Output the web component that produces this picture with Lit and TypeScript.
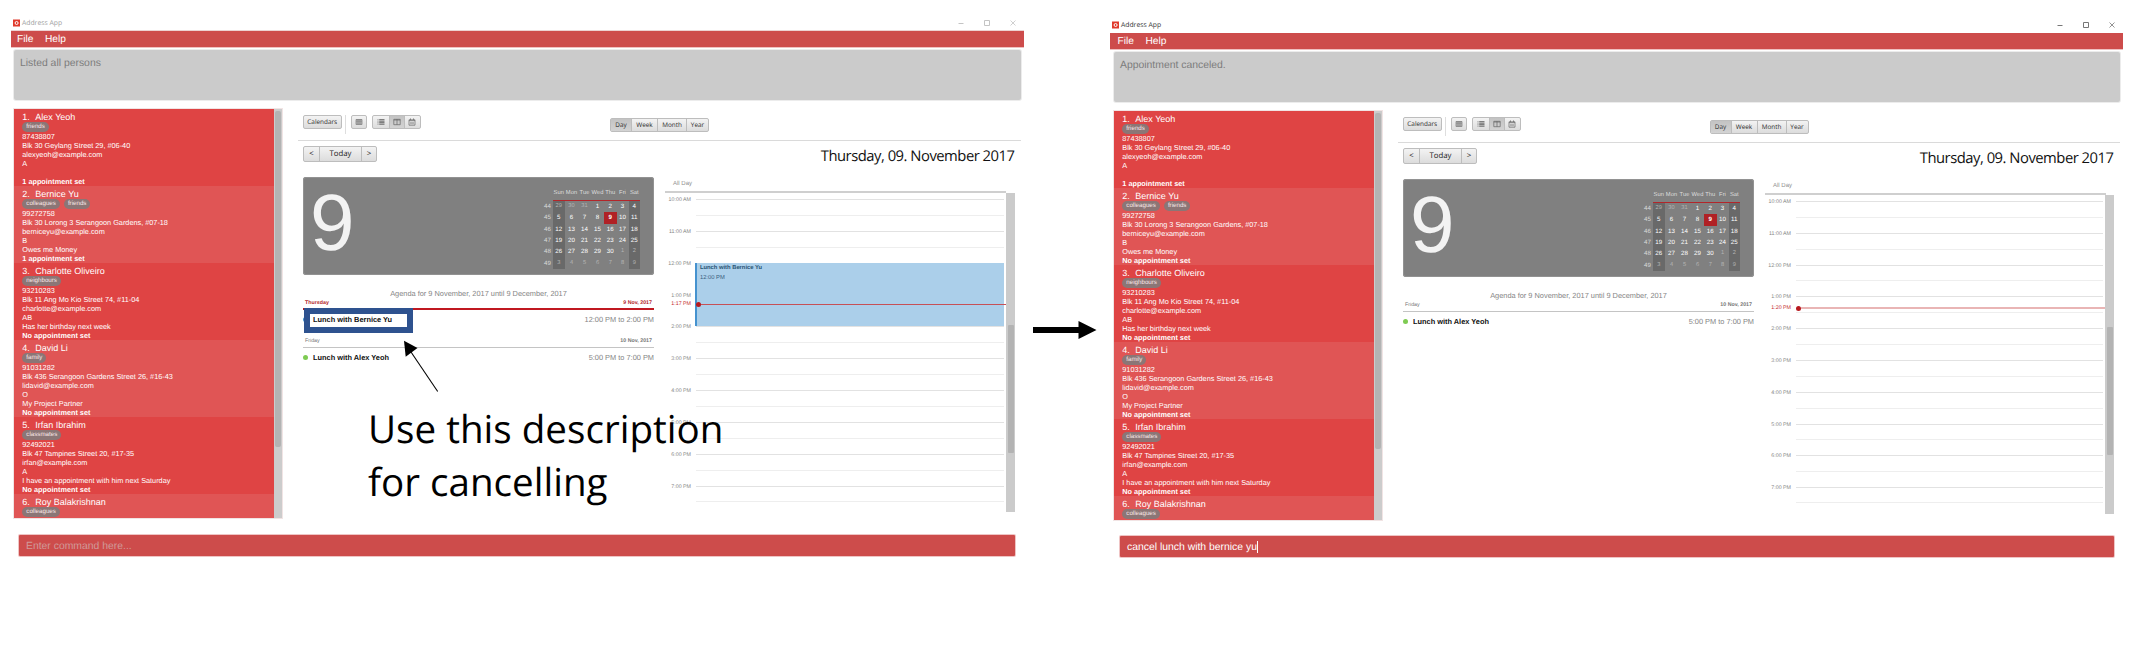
import { LitElement, html, css, svg, nothing } from "lit";
import { customElement, property } from "lit/decorators.js";
import { classMap } from "lit/directives/class-map.js";

interface Person {
  name: string;
  tags: string[];
  phone?: string;
  address?: string;
  email?: string;
  blood?: string;
  remark?: string;
  status?: string;
}

interface AgendaDay {
  day: string;
  date: string;
  today: boolean;
  title: string;
  time: string;
  boxed: boolean;
}

interface WindowState {
  message: string;
  command: string;
  placeholder: boolean;
  active: boolean;
  people: Person[];
  agenda: AgendaDay[];
  now: string;
  nowTop: number;
  event: boolean;
}

const NONE = "No appointment set";
const ONE = "1 appointment set";

const people = (berniceStatus: string): Person[] => [
  { name: "Alex Yeoh", tags: ["friends"], phone: "87438807", address: "Blk 30 Geylang Street 29, #06-40", email: "alexyeoh@example.com", blood: "A", remark: "", status: ONE },
  { name: "Bernice Yu", tags: ["colleagues", "friends"], phone: "99272758", address: "Blk 30 Lorong 3 Serangoon Gardens, #07-18", email: "berniceyu@example.com", blood: "B", remark: "Owes me Money", status: berniceStatus },
  { name: "Charlotte Oliveiro", tags: ["neighbours"], phone: "93210283", address: "Blk 11 Ang Mo Kio Street 74, #11-04", email: "charlotte@example.com", blood: "AB", remark: "Has her birthday next week", status: NONE },
  { name: "David Li", tags: ["family"], phone: "91031282", address: "Blk 436 Serangoon Gardens Street 26, #16-43", email: "lidavid@example.com", blood: "O", remark: "My Project Partner", status: NONE },
  { name: "Irfan Ibrahim", tags: ["classmates"], phone: "92492021", address: "Blk 47 Tampines Street 20, #17-35", email: "irfan@example.com", blood: "A", remark: "I have an appointment with him next Saturday", status: NONE },
  { name: "Roy Balakrishnan", tags: ["colleagues"] },
];

const friday: AgendaDay = { day: "Friday", date: "10 Nov, 2017", today: false, title: "Lunch with Alex Yeoh", time: "5:00 PM to 7:00 PM", boxed: false };

const before: WindowState = {
  message: "Listed all persons",
  command: "Enter command here...",
  placeholder: true,
  active: false,
  people: people(ONE),
  agenda: [
    { day: "Thursday", date: "9 Nov, 2017", today: true, title: "Lunch with Bernice Yu", time: "12:00 PM to 2:00 PM", boxed: true },
    friday,
  ],
  now: "1:17 PM",
  nowTop: 105,
  event: true,
};

const after: WindowState = {
  message: "Appointment canceled.",
  command: "cancel lunch with bernice yu",
  placeholder: false,
  active: true,
  people: people(NONE),
  agenda: [friday],
  now: "1:20 PM",
  nowTop: 107,
  event: false,
};

const HOURS = ["10:00 AM", "11:00 AM", "12:00 PM", "1:00 PM", "2:00 PM", "3:00 PM", "4:00 PM", "5:00 PM", "6:00 PM", "7:00 PM"];

const WEEKS: [number, number[]][] = [
  [44, [29, 30, 31, 1, 2, 3, 4]],
  [45, [5, 6, 7, 8, 9, 10, 11]],
  [46, [12, 13, 14, 15, 16, 17, 18]],
  [47, [19, 20, 21, 22, 23, 24, 25]],
  [48, [26, 27, 28, 29, 30, 1, 2]],
  [49, [3, 4, 5, 6, 7, 8, 9]],
];

@customElement("address-window")
export class AddressWindow extends LitElement {
  @property({ attribute: false }) state: WindowState = before;

  static styles = css`
    :host {
      display: flex;
      flex-direction: column;
      width: 1013px;
      font-family: "Liberation Sans", Arial, sans-serif;
      font-size: 7.4px;
      text-rendering: geometricPrecision;
      --shift: 0px;
      --body: 435px;
      --hour: 31.87px;
      --chrome: #a0a0a0;
      --ctl: #c4c4c4;
    }
    :host([active]) {
      --shift: 1px;
      --body: 434px;
      --hour: 31.8px;
      --chrome: #333;
      --ctl: #777;
    }
    * { box-sizing: border-box; }
    .titlebar {
      display: flex;
      align-items: center;
      height: 16px;
      padding: 0 8px 0 2px;
      color: var(--chrome);
      font: 6.8px/16px "Open Sans", sans-serif;
      white-space: pre;
    }
    .titlebar svg { display: block; }
    .appname { flex: 1; padding-left: 2px; }
    .controls { display: flex; gap: 20px; color: var(--ctl); }
    .menu {
      display: flex;
      gap: 11.5px;
      height: 17px;
      padding-left: 6px;
      background: #cd4c4b;
      border-bottom: 1px solid #efc0c0;
      box-shadow: 0 -1px 0 #ecd2d2;
      color: #fff;
      font-size: 10.2px;
      line-height: 18px;
    }
    :host([active]) .menu { padding-left: 7.5px; box-shadow: none; }
    .message {
      height: 50px;
      margin: 2px 3px 0 calc(3px + var(--shift));
      padding: 7px 6px;
      background: #cbcbcb;
      border-radius: 2px;
      box-shadow: 0 0 0 1px #ececec;
      color: #7c7c7c;
      font-size: 10.4px;
      line-height: 14px;
    }
    .body { display: flex; height: var(--body); padding: 9px 3px 0 calc(3px + var(--shift)); }
    .list { display: flex; width: 268px; height: 409px; flex: none; box-shadow: 0 0 0 1px #f1e4e4; }
    .cards { width: 260px; overflow: hidden; }
    .card { height: 77px; padding-left: 8.3px; background: #df4444; color: #fff; font-size: 7.3px; line-height: 9.6px; }
    .card:nth-child(even) { background: #e05555; }
    .name { display: flex; height: 13px; padding-top: 1.5px; font-size: 9px; line-height: 12px; }
    .index { width: 13px; }
    .tags { display: flex; gap: 4px; height: 10px; }
    .tag { padding: 0 4px; border-radius: 5px; background: #8b7676; color: #f8e6e6; font-size: 6.2px; line-height: 10px; }
    .line { height: 8.97px; white-space: pre; }
    .strong { font-weight: bold; }
    .track { width: 8px; padding: 2px 1px; background: #ccc; }
    .thumb { height: 336px; border-radius: 2px; background: #b3b3b3; }
    .pane { flex: 1; padding-left: 16px; min-width: 0; }
    .toolbar {
      display: grid;
      grid-template-columns: 1fr auto 1fr;
      height: 32px;
      padding: 6px 5px 0;
      border-bottom: 1px solid #dadada;
      font: 6.4px/12px "Open Sans", sans-serif;
      color: #2c2c2c;
    }
    .tools { display: flex; }
    .btns { display: flex; height: 14px; border: 1px solid #bdbdbd; border-radius: 2px; background: linear-gradient(#f3f3f3, #dcdcdc); text-align: center; }
    .btns > * + * { border-left: 1px solid #bdbdbd; }
    .on { background: linear-gradient(#c3c3c3, #d3d3d3); }
    .cals { width: 36.5px; }
    .rule { width: 1px; height: 19px; margin: 0 5px 0 3.5px; background: #dedede; }
    .ic { display: flex; align-items: center; justify-content: center; width: 14px; }
    .group { margin-left: 5px; }
    .group .ic { width: 15.5px; }
    .range { margin-top: 3px; }
    .d { width: 20px; } .w { width: 26px; } .m { width: 29px; } .y { width: 22px; }
    .navrow { display: flex; justify-content: space-between; padding: 5px 6.5px 0 5px; height: 36px; }
    .nav { height: 16px; font: 7.8px/14px "Open Sans", sans-serif; color: #222; }
    .side { width: 15px; }
    .nav .today { width: 42px; }
    .date { font: 14.8px/20px "Open Sans", sans-serif; letter-spacing: -0.49px; color: #111; }
    .columns { display: flex; gap: 11px; padding: 0 6px 0 5px; }
    .agenda { width: 351px; }
    .hero { display: flex; justify-content: space-between; height: 98px; padding: 0 14px 0 7px; border-radius: 3px; background: #808080; box-shadow: inset 0 0 0 1px #929292; }
    .big { font-size: 80px; line-height: 92px; color: #f3f3f3; }
    .mini { display: grid; grid-template-columns: 10px 12.5px 13px 13px 13px 12.5px 12px 11.5px; grid-template-rows: 24px repeat(6, 11.35px); height: 93px; font-size: 6.2px; color: #fff; text-align: center; line-height: 11px; }
    .wd { border-bottom: 1.5px solid #b3262a; padding-top: 11px; white-space: nowrap; font-size: 5.8px; color: #dedede; }
    .wk { color: #dadada; }
    .we { background: #696969; }
    .dim { color: #b4b4b4; font-size: 5.7px; }
    .sel { background: #b02125; font-weight: bold; color: #fff; }
    .caption { margin-top: 12px; text-align: center; line-height: 13px; color: #858585; }
    .dayhead { display: flex; justify-content: space-between; height: 10px; padding: 0 2px; border-bottom: 1px solid #c4c4c4; font-size: 5.3px; line-height: 6.5px; color: #777; }
    .dayhead b { font-weight: 600; }
    .dayhead.now { border-bottom: 2px solid #c01820; color: #b3262a; font-weight: bold; }
    .item { position: relative; display: flex; align-items: center; height: 19px; }
    .dot { width: 5px; height: 5px; border-radius: 50%; background: #7ecb52; margin-right: 5px; }
    .dot.blue { background: #3f8fce; }
    .what { flex: 1; font-weight: bold; color: #111; }
    .when { color: #858585; }
    .item.tall { height: 28px; padding-bottom: 10px; }
    .highlight { position: absolute; left: 1px; top: -2px; width: 109px; height: 25px; border: solid #2e528f; border-width: 6px; }
    .dayview { flex: 1; }
    .allday { width: 341px; height: 16px; padding-left: 8px; border-bottom: 2px solid #cfcfcf; font-size: 6px; line-height: 14px; color: #909090; }
    .grid { display: flex; justify-content: space-between; height: 319px; }
    .hours { position: relative; flex: 1; padding-top: 6px; }
    .hour { display: grid; grid-template-columns: 26px 1fr; column-gap: 5px; height: var(--hour); margin-right: 2px; }
    .label { text-align: right; line-height: 3px; font-size: 5.3px; color: #858585; white-space: nowrap; }
    .slots { display: grid; grid-template-rows: 1fr 1fr; border-top: 1px solid #e2e2e2; }
    .half { margin-top: -0.5px; border-top: 1px solid #eeeeee; grid-row: 2; }
    .hour:last-of-type { height: 30px; }
    .event { position: absolute; left: 30px; right: 2px; top: 70px; height: 63px; border-left: 2px solid #4592cf; background: #abcfea; color: #3b6180; font-size: 5.8px; line-height: 11px; padding-left: 3px; }
    .event b { display: block; line-height: 10px; color: #285474; }
    .nowline { position: absolute; left: 0; right: 0; display: flex; align-items: center; height: 12px; color: #c4262c; font-size: 5.3px; }
    .nowline .label { width: 26px; color: #c4262c; }
    .pin { width: 5px; height: 5px; border-radius: 50%; background: #b8191f; margin-left: 5px; }
    .bar { flex: 1; height: 1px; background: #c65056; }
    :host([active]) .bar { height: 2px; background: #e9b5b5; }
    .scroll { width: 9px; padding: 132px 1px 0; background: #cbcbcb; }
    .knob { width: 6px; height: 128px; margin-left: 0.5px; border-radius: 1px; background: #b3b3b3; }
    .command { display: flex; align-items: center; height: 21px; margin: 0 9px 0 calc(8px + var(--shift) * 2); padding: 1px 0 0 7px; border-radius: 1px; background: #cd4c4b; box-shadow: 0 0 0 1px #efc4c4; font-size: 10.4px; color: #fff; }
    .placeholder { color: #d09a99; }
    .caret { width: 1px; height: 12px; background: #fff; }
  `;

  private button(path: unknown) {
    return html`<svg width="8" height="8" viewBox="0 0 8 8" fill="none" stroke="#666" stroke-width="0.7">${path}</svg>`;
  }

  private mini() {
    const names = ["Sun", "Mon", "Tue", "Wed", "Thu", "Fri", "Sat"];
    return html`<div class="mini">
      <span></span>${names.map((n) => html`<span class="wd">${n}</span>`)}
      ${WEEKS.map(([week, days], row) => html`<span class="wk">${week}</span>${days.map((d, col) => html`<span
        class=${classMap({
          we: col === 0 || col === 6,
          dim: (row === 0 && d > 20) || (row > 3 && d < 20),
          sel: row === 1 && d === 9,
        })}>${d}</span>`)}`)}
    </div>`;
  }

  render() {
    const s = this.state;
    return html`
      <div class="titlebar">
        <svg width="7" height="8" viewBox="0 0 7 8"><rect y="0.5" width="7" height="7" fill="#e03a2c"/><circle cx="3.6" cy="4" r="1.5" fill="none" stroke="#fff" stroke-width="1"/></svg>
        <span class="appname">Address App</span>
        <div class="controls">
          <svg width="6" height="6" viewBox="0 0 6 6" stroke="currentColor"><path d="M.5 3.5h5"/></svg>
          <svg width="6" height="6" viewBox="0 0 6 6" fill="none" stroke="currentColor"><path d="M.5.5h5v5h-5z"/></svg>
          <svg width="6" height="6" viewBox="0 0 6 6" stroke="currentColor" stroke-width=".8"><path d="M.5.5l5 5M5.5.5l-5 5"/></svg>
        </div>
      </div>
      <div class="menu"><span>File</span><span>Help</span></div>
      <div class="message">${s.message}</div>
      <div class="body">
        <div class="list">
          <div class="cards">
            ${s.people.map((p, i) => html`<div class="card">
              <div class="name"><span class="index">${i + 1}.</span><span>${p.name}</span></div>
              <div class="tags">${p.tags.map((t) => html`<span class="tag">${t}</span>`)}</div>
              ${[p.phone, p.address, p.email, p.blood, p.remark].map((t) => html`<div class="line">${t}</div>`)}
              <div class="line strong">${p.status}</div>
            </div>`)}
          </div>
          <div class="track"><div class="thumb"></div></div>
        </div>
        <div class="pane">
          <div class="toolbar">
            <div class="tools">
              <div class="btns"><span class="cals">Calendars</span></div>
              <span class="rule"></span>
              <div class="btns"><span class="ic">${this.button(svg`<path d="M1 1.5h6v5H1zM1 2.2h6M1 3.7h6M1 5.1h6M3 1.5v5M5 1.5v5" stroke-width=".6"/>`)}</span></div>
              <div class="btns group">
                <span class="ic">${this.button(svg`<path d="M.5 1.7h1M.5 3.2h1M.5 4.7h1M.5 6.2h1"/><path d="M2.2 1.7h5.3M2.2 3.2h5.3M2.2 4.7h5.3M2.2 6.2h5.3" stroke-width="1"/>`)}</span>
                <span class="ic on">${this.button(svg`<path d="M.8 1.3h6.4v5.4H.8zM4 1.3v5.4M.8 2h6.4"/>`)}</span>
                <span class="ic">${this.button(svg`<path d="M1 1.8h6v5.4H1zM1 2.6h6"/><path d="M2.5.4v1.6M5.5.4v1.6"/><path d="M2 4.3h4M2 5.7h4" stroke-width=".5"/>`)}</span>
              </div>
            </div>
            <div class="btns range"><span class="d on">Day</span><span class="w">Week</span><span class="m">Month</span><span class="y">Year</span></div>
          </div>
          <div class="navrow">
            <div class="btns nav"><span class="side">&lt;</span><span class="today">Today</span><span class="side">&gt;</span></div>
            <div class="date">Thursday, 09. November 2017</div>
          </div>
          <div class="columns">
            <div class="agenda">
              <div class="hero"><div class="big">9</div>${this.mini()}</div>
              <div class="caption">Agenda for 9 November, 2017 until 9 December, 2017</div>
              ${s.agenda.map((a) => html`
                <div class=${classMap({ dayhead: true, now: a.today })}><span>${a.day}</span><b>${a.date}</b></div>
                <div class=${classMap({ item: true, tall: a.boxed })}>
                  <span class=${classMap({ dot: true, blue: a.boxed })}></span><span class="what">${a.title}</span><span class="when">${a.time}</span>
                  ${a.boxed ? html`<span class="highlight"></span>` : nothing}
                </div>`)}
            </div>
            <div class="dayview">
              <div class="allday">All Day</div>
              <div class="grid">
                <div class="hours">
                  ${HOURS.map((h) => html`<div class="hour"><span class="label">${h}</span><div class="slots"><div class="half"></div></div></div>`)}
                  ${s.event ? html`<section class="event"><b>Lunch with Bernice Yu</b>12:00 PM</section>` : nothing}
                  <section class="nowline" style="top:${s.nowTop}px"><span class="label">${s.now}</span><span class="pin"></span><span class="bar"></span></section>
                </div>
                <div class="scroll"><div class="knob"></div></div>
              </div>
            </div>
          </div>
        </div>
      </div>
      <div class="command"><span class=${s.placeholder ? "placeholder" : ""}>${s.command}</span>${s.placeholder ? nothing : html`<span class="caret"></span>`}</div>
    `;
  }
}

@customElement("app-root")
export class AppRoot extends LitElement {
  static styles = css`
    :host { display: block; position: relative; width: 2142px; height: 653px; background: #fff; overflow: hidden; }
    .stage { display: flex; align-items: flex-start; padding: 15px 0 0 11px; }
    .right { margin-top: 2px; }
    .next { display: block; flex: none; width: 86px; height: 20px; margin-top: 305px; }
    .note { position: absolute; left: 368px; top: 403px; font: 38.6px/53px "Open Sans", Lato, sans-serif; color: #000; white-space: pre; text-rendering: geometricPrecision; }
    .note span { display: block; width: fit-content; }
    .pointer { position: absolute; left: 400px; top: 336px; }
  `;

  render() {
    return html`
      <div class="stage">
        <address-window .state=${before}></address-window>
        <svg class="next" viewBox="0 0 86 20"><path d="M9 7h45.5v-6l18 9l-18 9v-6h-45.5z" fill="#000"/></svg>
        <address-window class="right" active .state=${after}></address-window>
      </div>
      <div class="note"><span>Use this description</span><span>for cancelling</span></div>
      <svg class="pointer" width="42" height="60" viewBox="0 0 42 60"><path d="M11 16L37.7 55.5" stroke="#000" stroke-width="1.1"/><path d="M4 4.7L17.5 12L5.7 20.7z"/></svg>
    `;
  }
}
